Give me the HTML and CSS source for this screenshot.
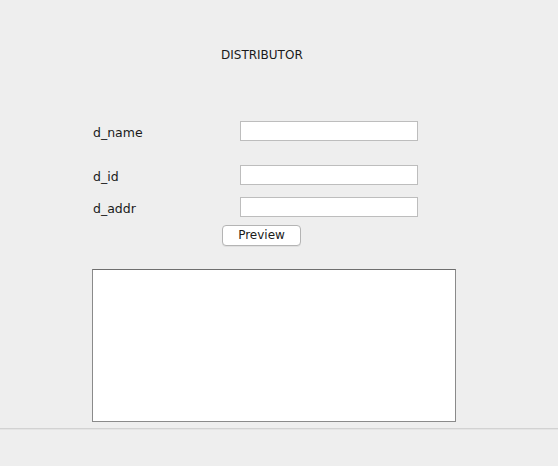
FILE: index.html
```html
<!DOCTYPE html>
<html>
<head>
<meta charset="utf-8">
<link rel="stylesheet" href="styles.css">
</head>
<body>
<div class="window">
  <div class="content">
    <div class="title">DISTRIBUTOR</div>
    <div class="form">
      <div class="row row-first">
        <label class="label">d_name</label>
        <input class="field" type="text">
      </div>
      <div class="row row-second">
        <label class="label">d_id</label>
        <input class="field" type="text">
      </div>
      <div class="row row-third">
        <label class="label">d_addr</label>
        <input class="field" type="text">
      </div>
    </div>
    <div class="actions">
      <button class="btn">Preview</button>
    </div>
    <div class="output"></div>
  </div>
  <div class="separator"></div>
</div>
</body>
</html>
```
FILE: styles.css
```css
html, body {
  margin: 0;
  padding: 0;
  background: #eeeeee;
}
body {
  width: 558px;
  height: 466px;
  overflow: hidden;
  font-family: "DejaVu Sans", "Liberation Sans", sans-serif;
  font-size: 12px;
  color: #1a1a1a;
}
.window {
  display: flex;
  flex-direction: column;
  height: 466px;
}
.content {
  padding-top: 47px;
  height: 381px;
}
.title {
  margin-left: 221px;
  height: 16px;
  line-height: 16px;
  font-size: 12px;
}
.form {
  margin-top: 58px;
  display: flex;
  flex-direction: column;
}
.row {
  display: flex;
  align-items: center;
  height: 20px;
}
.row-second { margin-top: 24px; }
.row-third { margin-top: 12px; }
.label {
  width: 147px;
  padding-left: 93px;
  padding-top: 2px;
  font-size: 12.5px;
}
.field {
  box-sizing: border-box;
  width: 178px;
  height: 20px;
  margin: 0;
  padding: 0 3px;
  border: 1px solid #bdbdbd;
  background: #ffffff;
  outline: none;
}
.actions {
  margin-top: 8px;
  padding-left: 222px;
  display: flex;
}
.btn {
  box-sizing: border-box;
  width: 79px;
  height: 21px;
  margin: 0;
  padding: 0;
  border: 1px solid #b4b4b4;
  border-radius: 4px;
  background: #ffffff;
  font-family: "DejaVu Sans", "Liberation Sans", sans-serif;
  font-size: 12px;
  color: #1a1a1a;
  line-height: 19px;
  box-shadow: 0 1px 0 rgba(0,0,0,0.06);
}
.output {
  box-sizing: border-box;
  margin-top: 23px;
  margin-left: 92px;
  width: 364px;
  height: 153px;
  background: #ffffff;
  border: 1px solid #8a8a8a;
  border-top-color: #6e6e6e;
}
.separator {
  height: 1px;
  background: #d2d2d2;
  border-bottom: 1px solid #e4e4e4;
}
```
